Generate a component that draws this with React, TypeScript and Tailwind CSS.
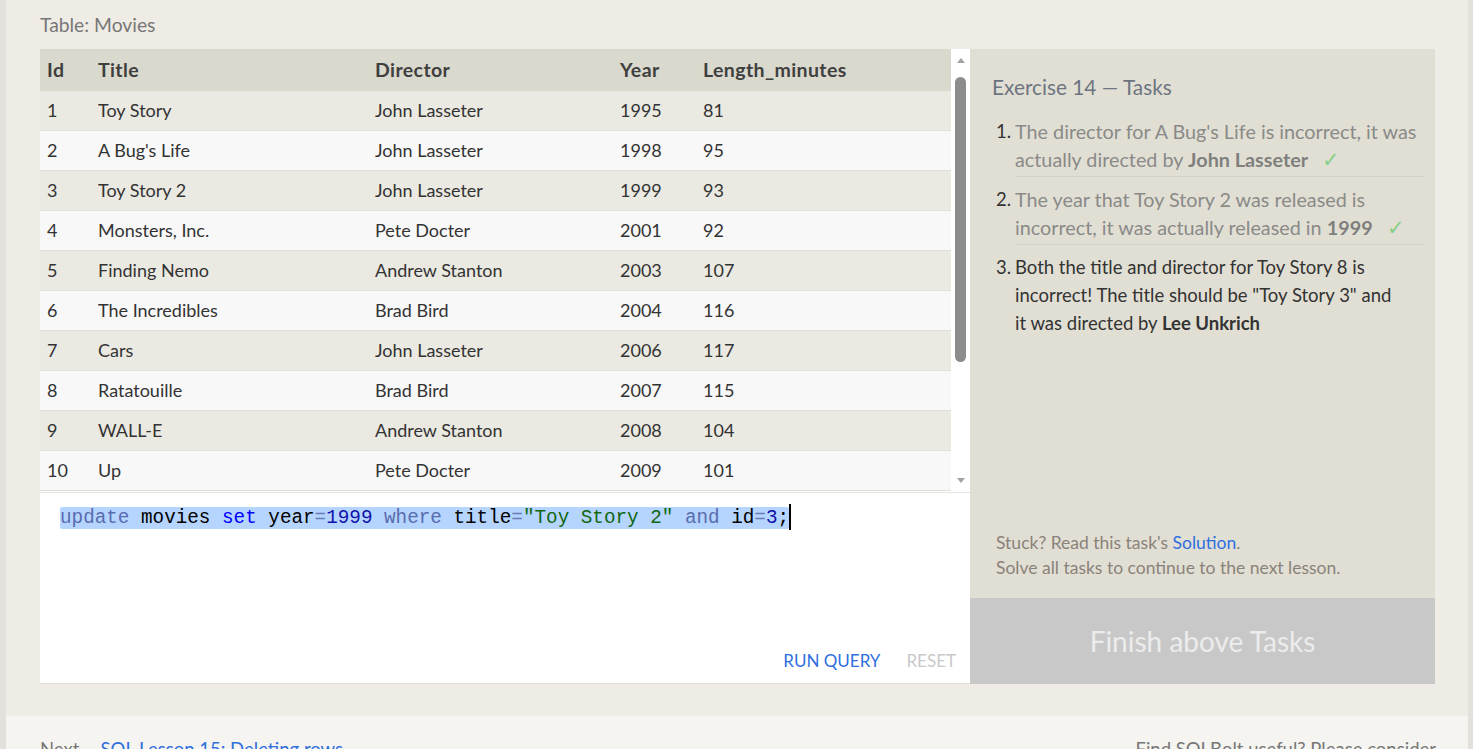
import React from 'react'

const rows = [
    [1, 'Toy Story', 'John Lasseter', 1995, 81],
    [2, "A Bug's Life", 'John Lasseter', 1998, 95],
    [3, 'Toy Story 2', 'John Lasseter', 1999, 93],
    [4, 'Monsters, Inc.', 'Pete Docter', 2001, 92],
    [5, 'Finding Nemo', 'Andrew Stanton', 2003, 107],
    [6, 'The Incredibles', 'Brad Bird', 2004, 116],
    [7, 'Cars', 'John Lasseter', 2006, 117],
    [8, 'Ratatouille', 'Brad Bird', 2007, 115],
    [9, 'WALL-E', 'Andrew Stanton', 2008, 104],
    [10, 'Up', 'Pete Docter', 2009, 101],
]

const cols = 'grid grid-cols-[51px_277px_245px_83px_1fr]'

const App = () => {
    return (
        <div className="flex min-h-[749px] font-['Lato','Liberation_Sans',sans-serif] bg-[#f5f4f0]">
            <div className="w-[6px] shrink-0 bg-[#e4e1dc]" />
            <div className="flex-1 flex flex-col">
                <section className="bg-[#efece5] pl-[34px] pr-[33px] pb-[32px]">
                    <div className="h-[49px] pt-[12px] text-[19.3px] leading-[25px] text-[#777]">Table: Movies</div>

                    <div className="flex">
                        {/* left: table + editor */}
                        <div className="w-[930px] flex flex-col">
                            <div className="h-[443px] flex bg-white overflow-hidden">
                                <div className="flex-1 flex flex-col text-[18px] text-[#333]">
                                    <div className={cols + ' h-[42px] items-center bg-[#dad9cd] font-bold text-[19.5px] tracking-[0.4px] text-[#3f3f3f]'}>
                                        <div className="pl-[7px]">Id</div>
                                        <div className="pl-[7px]">Title</div>
                                        <div className="pl-[7px]">Director</div>
                                        <div className="pl-[7px]">Year</div>
                                        <div className="pl-[7px]">Length_minutes</div>
                                    </div>
                                    {rows.map((r, i) => (
                                        <div
                                            key={i}
                                            className={cols + ' h-[40px] shrink-0 items-center border-b border-[#e0dfda] ' + (i % 2 === 0 ? 'bg-[#eae9e2]' : 'bg-[#f8f8f8]')}>
                                            {r.map((c, j) => (
                                                <div key={j} className="pl-[7px] -mt-[1px]">{c}</div>
                                            ))}
                                        </div>
                                    ))}
                                </div>
                                {/* scrollbar */}
                                <div className="w-[19px] shrink-0 bg-white flex flex-col items-center pt-[9px]">
                                    <div className="w-0 h-0 border-l-[4px] border-r-[4px] border-b-[5px] border-l-transparent border-r-transparent border-b-[#a3a3a3]" />
                                    <div className="mt-[14px] w-[11px] h-[285px] rounded-full bg-[#8c8c8c]" />
                                    <div className="flex-1" />
                                    <div className="mb-[9px] w-0 h-0 border-l-[4px] border-r-[4px] border-t-[5px] border-l-transparent border-r-transparent border-t-[#a3a3a3]" />
                                </div>
                            </div>

                            <div className="h-[192px] bg-white border-t border-[#e6e5df] border-b border-b-[#e2dfd8] flex flex-col">
                                <div className="pl-[20px] pt-[13px] font-['Liberation_Mono',monospace] text-[19.3px] leading-[24px] whitespace-pre">
                                    <span className="bg-[#b5d5ff] rounded-[2px]">
                                        <span className="text-[#5a6cb0]">update</span>
                                        <span className="text-black"> movies </span>
                                        <span className="text-[#0000ff]">set</span>
                                        <span className="text-black"> year</span>
                                        <span className="text-[#6a7bb5]">=</span>
                                        <span className="text-[#1111aa]">1999</span>
                                        <span className="text-black"> </span>
                                        <span className="text-[#5a6cb0]">where</span>
                                        <span className="text-black"> title</span>
                                        <span className="text-[#6a7bb5]">=</span>
                                        <span className="text-[#116611]">"Toy Story 2"</span>
                                        <span className="text-black"> </span>
                                        <span className="text-[#5a6cb0]">and</span>
                                        <span className="text-black"> id</span>
                                        <span className="text-[#6a7bb5]">=</span>
                                        <span className="text-[#1111aa]">3</span>
                                        <span className="text-black">;</span>
                                    </span>
                                    <span className="inline-block w-[2px] h-[26px] bg-black align-middle -mt-[2px]" />
                                </div>
                                <div className="flex-1" />
                                <div className="flex justify-end gap-[26px] pr-[14px] pb-[11px] text-[17px] leading-[22px]">
                                    <span className="text-[#2f6fe0]">RUN QUERY</span>
                                    <span className="text-[#c9c9c9]">RESET</span>
                                </div>
                            </div>
                        </div>

                        {/* right: tasks */}
                        <div className="w-[465px] flex flex-col bg-[#e1dfd4]">
                            <div className="flex-1 flex flex-col pl-[22px] pr-[10px] pt-[25px]">
                                <h2 className="text-[20.8px] leading-[26px] text-[#6d7481]">Exercise 14 — Tasks</h2>
                                <ol className="mt-[17px] text-[18.5px] leading-[28px]">
                                    <li className="flex pb-[8px]">
                                        <span className="w-[23px] shrink-0 pl-[4px] text-[#333]">1.</span>
                                        <div className="flex-1 text-[19.8px] text-[#8a8a88] border-b border-[#d3d1c6] pb-[3px]">
                                            The director for A Bug's Life is incorrect, it was actually directed by{' '}
                                            <b className="text-[#7f7f7d]">John Lasseter</b>
                                            <span className="ml-[14px] text-[21px] text-[#86cf86]">✓</span>
                                        </div>
                                    </li>
                                    <li className="flex pb-[8px]">
                                        <span className="w-[23px] shrink-0 pl-[4px] text-[#333]">2.</span>
                                        <div className="flex-1 text-[19.8px] text-[#8a8a88] border-b border-[#d3d1c6] pb-[3px]">
                                            The year that Toy Story 2 was released is incorrect, it was actually released in{' '}
                                            <b className="text-[#7f7f7d]">1999</b>
                                            <span className="ml-[14px] text-[21px] text-[#86cf86]">✓</span>
                                        </div>
                                    </li>
                                    <li className="flex">
                                        <span className="w-[23px] shrink-0 pl-[4px] text-[#333]">3.</span>
                                        <div className="flex-1 pr-[22px] text-[#333]">
                                            Both the title and director for Toy Story 8 is incorrect! The title should be "Toy Story 3" and it was directed by{' '}
                                            <b>Lee Unkrich</b>
                                        </div>
                                    </li>
                                </ol>
                                <div className="flex-1" />
                                <div className="pl-[4px] pb-[18px] text-[17.5px] leading-[25px] text-[#8a827a]">
                                    <div>Stuck? Read this task's <span className="text-[#2f6fe0]">Solution</span>.</div>
                                    <div>Solve all tasks to continue to the next lesson.</div>
                                </div>
                            </div>
                            <div className="h-[86px] bg-[#c8c8c8] flex items-center justify-center text-[28px] text-[#ececec]">
                                Finish above Tasks
                            </div>
                        </div>
                    </div>
                </section>

                <div className="flex justify-between pl-[34px] pr-[32px] pt-[21px] text-[18.5px] leading-[24px] text-[#777]">
                    <div>
                        Next – <span className="ml-[1px] text-[#2f6fe0]">SQL Lesson 15: Deleting rows</span>
                    </div>
                    <div>Find SQLBolt useful? Please consider</div>
                </div>
            </div>
            <div className="w-[6px] shrink-0 bg-[#e4e1dc]" />
        </div>
    )
}

export default App
